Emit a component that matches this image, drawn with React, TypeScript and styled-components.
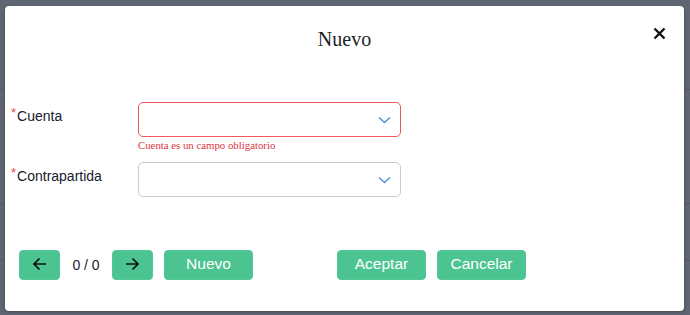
import React from "react";
import styled, { createGlobalStyle } from "styled-components";

const GlobalStyle = createGlobalStyle`
  html, body {
    margin: 0;
    padding: 0;
    background: #5f6572;
  }
  #root {
    width: 690px;
    height: 315px;
    overflow: hidden;
  }
`;

const Page = styled.div`
  position: relative;
  width: 690px;
  height: 315px;
  background: #5f6572;
  font-family: "Liberation Sans", Arial, sans-serif;
`;

// the page behind the dimmed overlay
const Behind = styled.div`
  display: flex;
  flex-direction: column;
  padding-top: 89px;
`;

const BehindRow = styled.div<{ $h: number }>`
  height: ${(p) => p.$h}px;
  border-top: 1px solid #535865;
  color: #20242c;
  font-size: 14px;
  line-height: 52px;
  margin-left: -7px;
`;

const Overlay = styled.div`
  position: absolute;
  inset: 0;
  padding: 6px 6px 4px 5px;
  box-sizing: border-box;
`;

const Modal = styled.div`
  position: relative;
  width: 679px;
  height: 305px;
  background: #fff;
  border-radius: 4px;
  box-shadow: 0 1px 3px rgba(0, 0, 0, 0.3);
  display: flex;
  flex-direction: column;
  box-sizing: border-box;
`;

const Header = styled.div`
  height: 96px;
  display: flex;
  justify-content: center;
  padding-top: 21px;
  box-sizing: border-box;
`;

const Title = styled.h2`
  margin: 0;
  font-family: "Liberation Serif", "Times New Roman", serif;
  font-weight: normal;
  font-size: 20px;
  line-height: 24px;
  color: #1b1f27;
`;

const Close = styled.button`
  position: absolute;
  top: 19px;
  right: 17px;
  width: 16px;
  height: 16px;
  padding: 0;
  border: none;
  background: none;
  display: flex;
  align-items: center;
  justify-content: center;
`;

const Form = styled.div`
  display: grid;
  grid-template-columns: 127px 263px;
  padding-left: 6px;
`;

const Label = styled.label`
  display: flex;
  align-items: flex-start;
  padding-top: 4px;
  font-size: 14px;
  line-height: 20px;
  color: #16202e;
`;

const Req = styled.span`
  color: #e5484d;
  font-size: 13px;
  line-height: 14px;
  margin-right: 1px;
`;

const Field = styled.div<{ $gap: number }>`
  display: flex;
  flex-direction: column;
  padding-bottom: ${(p) => p.$gap}px;
`;

const SelectBox = styled.div<{ $error?: boolean }>`
  height: 35px;
  box-sizing: border-box;
  border: 1px solid ${(p) => (p.$error ? "#f0575c" : "#c9cbcf")};
  border-radius: 5px;
  display: flex;
  align-items: center;
  justify-content: flex-end;
  padding-right: 9px;
  background: #fff;
`;

const ErrorText = styled.div`
  font-family: "Liberation Serif", "Times New Roman", serif;
  font-size: 10.8px;
  line-height: 13px;
  color: #d9363e;
  margin-top: 2px;
  height: 14px;
`;

const Footer = styled.div`
  display: flex;
  align-items: center;
  padding-left: 14px;
  margin-top: 53px;
`;

const Btn = styled.button<{ $w: number; $ml?: number }>`
  width: ${(p) => p.$w}px;
  height: 30px;
  margin-left: ${(p) => p.$ml ?? 0}px;
  border: 1px solid #52c897;
  border-radius: 4px;
  background: #4bc492;
  color: #fff;
  font-family: "Liberation Sans", Arial, sans-serif;
  font-size: 15.5px;
  line-height: 20px;
  padding: 0 0 3px;
  display: flex;
  align-items: center;
  justify-content: center;
`;

const Counter = styled.span`
  width: 52px;
  text-align: center;
  font-size: 14px;
  color: #1a2233;
`;

const Chevron = () => (
  <svg width="13" height="8" viewBox="0 0 13 8">
    <path d="M1 1.5 L6.5 6.5 L12 1.5" fill="none" stroke="#5d93d9" strokeWidth="1.6" />
  </svg>
);

const Arrow = ({ dir }: { dir: "left" | "right" }) => (
  <svg width="15" height="14" viewBox="0 0 15 14" style={{ transform: dir === "right" ? "scaleX(-1)" : undefined }}>
    <path d="M14 7 H2 M7.5 1.5 L2 7 L7.5 12.5" fill="none" stroke="#111" strokeWidth="1.7" />
  </svg>
);

export default function App() {
  return (
    <>
      <GlobalStyle />
      <Page>
        <Behind>
          <BehindRow $h={113}>c</BehindRow>
          <BehindRow $h={56} />
          <BehindRow $h={40} />
        </Behind>
        <Overlay>
          <Modal>
            <Header>
              <Title>Nuevo</Title>
            </Header>
            <Close aria-label="Cerrar">
              <svg width="13" height="13" viewBox="0 0 13 13">
                <path d="M1.5 1.5 L11.5 11.5 M11.5 1.5 L1.5 11.5" stroke="#111" strokeWidth="2.4" />
              </svg>
            </Close>
            <Form>
              <Label>
                <Req>*</Req>Cuenta
              </Label>
              <Field $gap={9}>
                <SelectBox $error>
                  <Chevron />
                </SelectBox>
                <ErrorText>Cuenta es un campo obligatorio</ErrorText>
              </Field>
              <Label>
                <Req>*</Req>Contrapartida
              </Label>
              <Field $gap={0}>
                <SelectBox>
                  <Chevron />
                </SelectBox>
              </Field>
            </Form>
            <Footer>
              <Btn $w={41}>
                <Arrow dir="left" />
              </Btn>
              <Counter>0 / 0</Counter>
              <Btn $w={41}>
                <Arrow dir="right" />
              </Btn>
              <Btn $w={89} $ml={11}>Nuevo</Btn>
              <Btn $w={89} $ml={84}>Aceptar</Btn>
              <Btn $w={89} $ml={11}>Cancelar</Btn>
            </Footer>
          </Modal>
        </Overlay>
      </Page>
    </>
  );
}
